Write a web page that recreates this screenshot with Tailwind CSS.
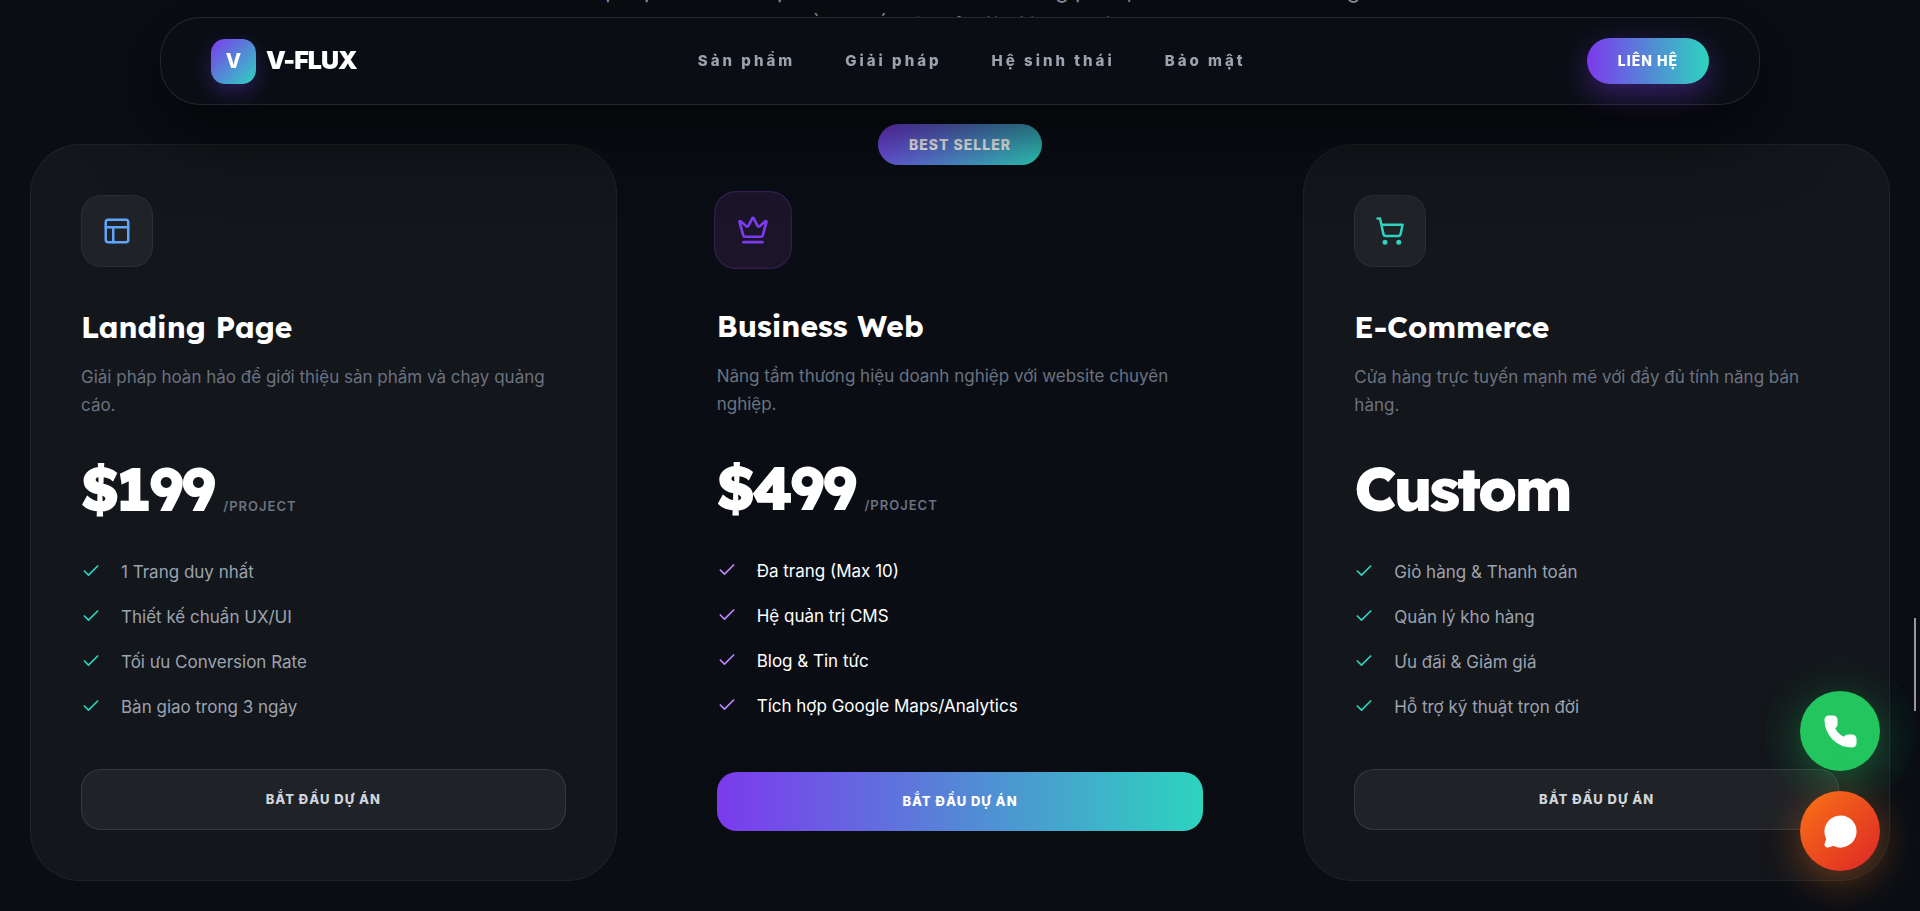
<!DOCTYPE html>
<html lang="vi">
<head>
    <meta charset="utf-8">
    <meta name="viewport" content="width=device-width, initial-scale=1">
    <title>V-FLUX - Bảng giá</title>
    <script src="https://cdn.jsdelivr.net/npm/@tailwindcss/browser@4"></script>
</head>
<body class="h-screen overflow-hidden bg-[#0a0e14] font-['Inter',sans-serif] text-white">
    <!-- Icons -->
    <svg class="hidden">
        <symbol id="check" viewBox="0 0 24 24" fill="none" stroke="currentColor" stroke-width="2" stroke-linecap="round" stroke-linejoin="round">
            <path d="M20 6 9 17l-5-5"/>
        </symbol>
    </svg>

    <!-- Header -->
    <header class="fixed inset-x-0 top-[17px] z-20 px-40">
        <nav class="flex items-center justify-between rounded-[40px] border border-white/10 bg-[#0a0e14] px-[50px] py-5 shadow-[0_20px_80px_rgba(0,0,0,0.8)]">
            <a href="#" class="flex items-center gap-[10px]">
                <span class="flex size-[45px] items-center justify-center rounded-[14px] bg-linear-135/srgb from-[#7c3aed] to-[#2dd4bf] text-xl font-extrabold shadow-[0_8px_20px_rgba(124,58,237,0.3)]">V</span>
                <span class="text-[25px] font-black tracking-[-1px]">V-FLUX</span>
            </a>
            <div class="flex gap-[50px] text-[15px] font-extrabold tracking-[3px] text-[#9ca3af]">
                <a href="#">Sản phẩm</a>
                <a href="#">Giải pháp</a>
                <a href="#">Hệ sinh thái</a>
                <a href="#">Bảo mật</a>
            </div>
            <button class="h-[46px] rounded-full bg-linear-to-r/srgb from-[#7c3aed] to-[#2dd4bf] px-[31px] text-sm font-extrabold tracking-[1px] shadow-[0_10px_30px_rgba(124,58,237,0.4)]">LIÊN HỆ</button>
        </nav>
    </header>

    <main class="px-[30px]">
        <!-- Intro -->
        <p class="mx-auto -mt-[27px] mb-[101px] max-w-[900px] text-center text-[22px] leading-[35px] text-[#9ca3af]">Giải pháp thiết kế và phát triển website theo từng phần, chia ra theo tên riêng<br>đầu tư tất cả chỉ với vài thao tác</p>

        <!-- Pricing -->
        <div class="grid grid-cols-3 gap-[50px]">
            <section class="flex h-[737px] flex-col rounded-[50px] border border-white/5 bg-[#13161b] p-[50px]">
                <div class="flex size-[72px] items-center justify-center rounded-[20px] border border-white/5 bg-[#1f2227] text-[#60a5fa]">
                    <svg class="size-[30px]" viewBox="0 0 24 24" fill="none" stroke="currentColor" stroke-width="2" stroke-linecap="round" stroke-linejoin="round"><rect x="3" y="3" width="18" height="18" rx="2"/><path d="M3 9h18M9 21V9"/></svg>
                </div>
                <h3 class="mt-10 font-['Lexend','Inter',sans-serif] text-[30px] leading-10 font-bold">Landing Page</h3>
                <p class="mt-4 text-[17px] leading-7 text-[#6b7280]">Giải pháp hoàn hảo để giới thiệu sản phẩm và chạy quảng cáo.</p>
                <div class="mt-[35px] flex h-[70px] items-baseline gap-[10px] font-['Lexend','Inter',sans-serif] text-[60px] leading-[70px] font-extrabold tracking-[-3px]">$199<span class="font-['Inter',sans-serif] text-[13px] font-semibold tracking-[1px] text-[#6b7280]">/PROJECT</span></div>
                <ul class="mt-9 space-y-5 text-[17px] leading-[25px] text-[#9ca3af]">
                    <li class="flex gap-5"><svg class="mt-px size-5 text-[#2dd4bf]"><use href="#check"/></svg>1 Trang duy nhất</li>
                    <li class="flex gap-5"><svg class="mt-px size-5 text-[#2dd4bf]"><use href="#check"/></svg>Thiết kế chuẩn UX/UI</li>
                    <li class="flex gap-5"><svg class="mt-px size-5 text-[#2dd4bf]"><use href="#check"/></svg>Tối ưu Conversion Rate</li>
                    <li class="flex gap-5"><svg class="mt-px size-5 text-[#2dd4bf]"><use href="#check"/></svg>Bàn giao trong 3 ngày</li>
                </ul>
                <button class="mt-auto h-[61px] rounded-[20px] border border-white/10 bg-[#1f2227] text-[13px] font-extrabold tracking-[1px] text-[#d1d5db]">BẮT ĐẦU DỰ ÁN</button>
            </section>

            <section class="relative flex h-[737px] flex-col p-[50px]">
                <span class="absolute -top-5 left-1/2 -translate-x-1/2 rounded-full bg-linear-135/srgb from-[#7c3aed] to-[#2dd4bf] px-[31px] py-[10px] text-sm leading-[21px] font-extrabold tracking-[1px] whitespace-nowrap">BEST SELLER</span>
                <div class="flex size-[72px] scale-108 items-center justify-center rounded-[20px] border border-purple-500/20 bg-[#1b1529] text-[#7c3aed]">
                    <svg class="size-[30px]" viewBox="0 0 24 24" fill="none" stroke="currentColor" stroke-width="2" stroke-linecap="round" stroke-linejoin="round"><path d="M11.562 3.266a.5.5 0 0 1 .876 0L15.39 8.87a1 1 0 0 0 1.516.294L21.183 5.5a.5.5 0 0 1 .798.519l-2.834 10.246a1 1 0 0 1-.956.734H5.81a1 1 0 0 1-.957-.734L2.02 6.02a.5.5 0 0 1 .798-.519l4.276 3.664a1 1 0 0 0 1.516-.294z"/><path d="M5 21h14"/></svg>
                </div>
                <h3 class="mt-10 font-['Lexend','Inter',sans-serif] text-[30px] leading-10 font-bold">Business Web</h3>
                <p class="mt-4 text-[17px] leading-7 text-[#6b7280]">Nâng tầm thương hiệu doanh nghiệp với website chuyên nghiệp.</p>
                <div class="mt-[35px] flex h-[70px] items-baseline gap-[10px] font-['Lexend','Inter',sans-serif] text-[60px] leading-[70px] font-extrabold tracking-[-3px]">$499<span class="font-['Inter',sans-serif] text-[13px] font-semibold tracking-[1px] text-[#6b7280]">/PROJECT</span></div>
                <ul class="mt-9 space-y-5 text-[17px] leading-[25px] text-white">
                    <li class="flex gap-5"><svg class="mt-px size-5 text-[#c084fc]"><use href="#check"/></svg>Đa trang (Max 10)</li>
                    <li class="flex gap-5"><svg class="mt-px size-5 text-[#c084fc]"><use href="#check"/></svg>Hệ quản trị CMS</li>
                    <li class="flex gap-5"><svg class="mt-px size-5 text-[#c084fc]"><use href="#check"/></svg>Blog &amp; Tin tức</li>
                    <li class="flex gap-5"><svg class="mt-px size-5 text-[#c084fc]"><use href="#check"/></svg>Tích hợp Google Maps/Analytics</li>
                </ul>
                <button class="mt-auto h-[59px] rounded-[20px] bg-linear-to-r/srgb from-[#7c3aed] to-[#2dd4bf] text-[13px] font-extrabold tracking-[1px] shadow-[0_10px_20px_rgba(13,13,15,0.8)]">BẮT ĐẦU DỰ ÁN</button>
            </section>

            <section class="flex h-[737px] flex-col rounded-[50px] border border-white/5 bg-[#13161b] p-[50px]">
                <div class="flex size-[72px] items-center justify-center rounded-[20px] border border-white/5 bg-[#1f2227] text-[#2dd4bf]">
                    <svg class="size-[30px]" viewBox="0 0 24 24" fill="none" stroke="currentColor" stroke-width="2" stroke-linecap="round" stroke-linejoin="round"><circle cx="8" cy="21" r="1"/><circle cx="19" cy="21" r="1"/><path d="M2.05 2.05h2l2.66 12.42a2 2 0 0 0 2 1.58h9.78a2 2 0 0 0 1.95-1.57l1.65-7.43H5.12"/></svg>
                </div>
                <h3 class="mt-10 font-['Lexend','Inter',sans-serif] text-[30px] leading-10 font-bold">E-Commerce</h3>
                <p class="mt-4 text-[17px] leading-7 text-[#6b7280]">Cửa hàng trực tuyến mạnh mẽ với đầy đủ tính năng bán hàng.</p>
                <div class="mt-[35px] flex h-[70px] items-baseline font-['Lexend','Inter',sans-serif] text-[60px] leading-[70px] font-extrabold tracking-[-3px]">Custom</div>
                <ul class="mt-9 space-y-5 text-[17px] leading-[25px] text-[#9ca3af]">
                    <li class="flex gap-5"><svg class="mt-px size-5 text-[#2dd4bf]"><use href="#check"/></svg>Giỏ hàng &amp; Thanh toán</li>
                    <li class="flex gap-5"><svg class="mt-px size-5 text-[#2dd4bf]"><use href="#check"/></svg>Quản lý kho hàng</li>
                    <li class="flex gap-5"><svg class="mt-px size-5 text-[#2dd4bf]"><use href="#check"/></svg>Ưu đãi &amp; Giảm giá</li>
                    <li class="flex gap-5"><svg class="mt-px size-5 text-[#2dd4bf]"><use href="#check"/></svg>Hỗ trợ kỹ thuật trọn đời</li>
                </ul>
                <button class="mt-auto h-[61px] rounded-[20px] border border-white/10 bg-[#1f2227] text-[13px] font-extrabold tracking-[1px] text-[#d1d5db]">BẮT ĐẦU DỰ ÁN</button>
            </section>
        </div>
    </main>

    <!-- Contact buttons -->
    <div class="fixed right-10 bottom-10 z-30 flex flex-col gap-5">
        <a href="#" aria-label="Gọi điện" class="flex size-20 items-center justify-center rounded-full bg-[#22c55e] shadow-[0_10px_40px_rgba(34,197,94,0.4),0_0_0_35px_rgba(34,197,94,0.02)]">
            <svg class="size-[35px]" viewBox="0 0 24 24" fill="#fff" stroke="#fff" stroke-width="2" stroke-linejoin="round"><path d="M13.832 16.568a1 1 0 0 0 1.213-.303l.355-.465A2 2 0 0 1 17 15h3a2 2 0 0 1 2 2v3a2 2 0 0 1-2 2A18 18 0 0 1 2 4a2 2 0 0 1 2-2h3a2 2 0 0 1 2 2v3a2 2 0 0 1-.8 1.6l-.468.351a1 1 0 0 0-.292 1.233 14 14 0 0 0 6.392 6.384"/></svg>
        </a>
        <a href="#" aria-label="Nhắn tin" class="flex size-20 items-center justify-center rounded-full bg-linear-135/srgb from-[#f97316] to-[#dc2626] shadow-[0_10px_40px_rgba(249,115,22,0.4)]">
            <svg class="size-[35px]" viewBox="0 0 24 24" fill="#fff" stroke="#fff" stroke-width="2" stroke-linejoin="round"><path d="M2.992 16.342a2 2 0 0 1 .094 1.167l-1.065 3.29a1 1 0 0 0 1.236 1.168l3.413-.998a2 2 0 0 1 1.099.092 10 10 0 1 0-4.777-4.719"/></svg>
        </a>
    </div>

    <!-- Scroll thumb -->
    <div class="fixed top-[618px] right-1 z-30 h-[93px] w-0.5 bg-[#999]"></div>
</body>
</html>
